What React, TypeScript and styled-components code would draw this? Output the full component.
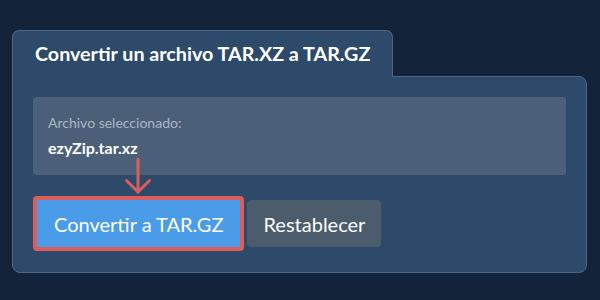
import React from "react";
import styled, { createGlobalStyle } from "styled-components";

const GlobalStyle = createGlobalStyle`
  html, body {
    margin: 0;
    padding: 0;
    background: #12233a;
    font-family: Lato, "Open Sans", sans-serif;
  }
`;

const Page = styled.div`
  width: 600px;
  height: 300px;
  box-sizing: border-box;
  padding: 30px 13px 0 12px;
`;

const Tab = styled.div`
  display: inline-block;
  box-sizing: border-box;
  height: 47px;
  padding: 0 22px 0 22px;
  background: #2d4a6a;
  border: 1px solid #4b6686;
  border-bottom: none;
  border-radius: 7px 7px 0 0;
  position: relative;
  z-index: 1;
`;

const Title = styled.h1`
  margin: 0;
  font-size: 19.7px;
  line-height: 46px;
  font-weight: 700;
  color: #ffffff;
  white-space: nowrap;
`;

const Panel = styled.div`
  box-sizing: border-box;
  height: 197px;
  margin-top: -1px;
  padding: 20px 20px 0 20px;
  background: #2d4a6a;
  border: 1px solid #4b6686;
  border-radius: 0 8px 8px 8px;
`;

const FileBox = styled.div`
  box-sizing: border-box;
  height: 78px;
  padding: 17px 15px 0 15px;
  background: #4b6078;
  border-radius: 3px;
`;

const Label = styled.div`
  font-size: 14px;
  color: #a9b5c3;
  line-height: 18px;
`;

const FileName = styled.div`
  margin-top: 6px;
  font-size: 16px;
  font-weight: 700;
  color: #ffffff;
  line-height: 20px;
`;

const ArrowWrap = styled.div`
  display: flex;
  align-items: flex-start;
  height: 21px;
  padding-left: 89px;
`;

const Actions = styled.div`
  display: flex;
  align-items: center;
  gap: 3px;
`;

const Button = styled.button<{ $primary?: boolean }>`
  box-sizing: border-box;
  height: ${(p) => (p.$primary ? "55px" : "47px")};
  padding: 0 ${(p) => (p.$primary ? "17px" : "16px")};
  border: ${(p) => (p.$primary ? "4px solid #dd5c5c" : "none")};
  border-radius: 4px;
  background: ${(p) => (p.$primary ? "#4a9be8" : "#4b5c6d")};
  color: #ffffff;
  font-family: Lato, "Open Sans", sans-serif;
  font-size: 20px;
  font-weight: 400;
  cursor: pointer;
`;

function Arrow() {
  return (
    <svg width="32" height="38" viewBox="0 0 32 38" style={{ display: "block", marginTop: -18, flexShrink: 0 }}>
      <g stroke="#dd5c5c" strokeWidth="3" fill="none" strokeLinecap="round" strokeLinejoin="round">
        <line x1="16" y1="2" x2="16" y2="35" />
        <polyline points="4.5,23.5 16,35 27.5,23.5" />
      </g>
    </svg>
  );
}

export default function App() {
  return (
    <>
      <GlobalStyle />
      <Page>
        <Tab>
          <Title>Convertir un archivo TAR.XZ a TAR.GZ</Title>
        </Tab>
        <Panel>
          <FileBox>
            <Label>Archivo seleccionado:</Label>
            <FileName>ezyZip.tar.xz</FileName>
          </FileBox>
          <ArrowWrap>
            <Arrow />
          </ArrowWrap>
          <Actions>
            <Button $primary>Convertir a TAR.GZ</Button>
            <Button>Restablecer</Button>
          </Actions>
        </Panel>
      </Page>
    </>
  );
}
